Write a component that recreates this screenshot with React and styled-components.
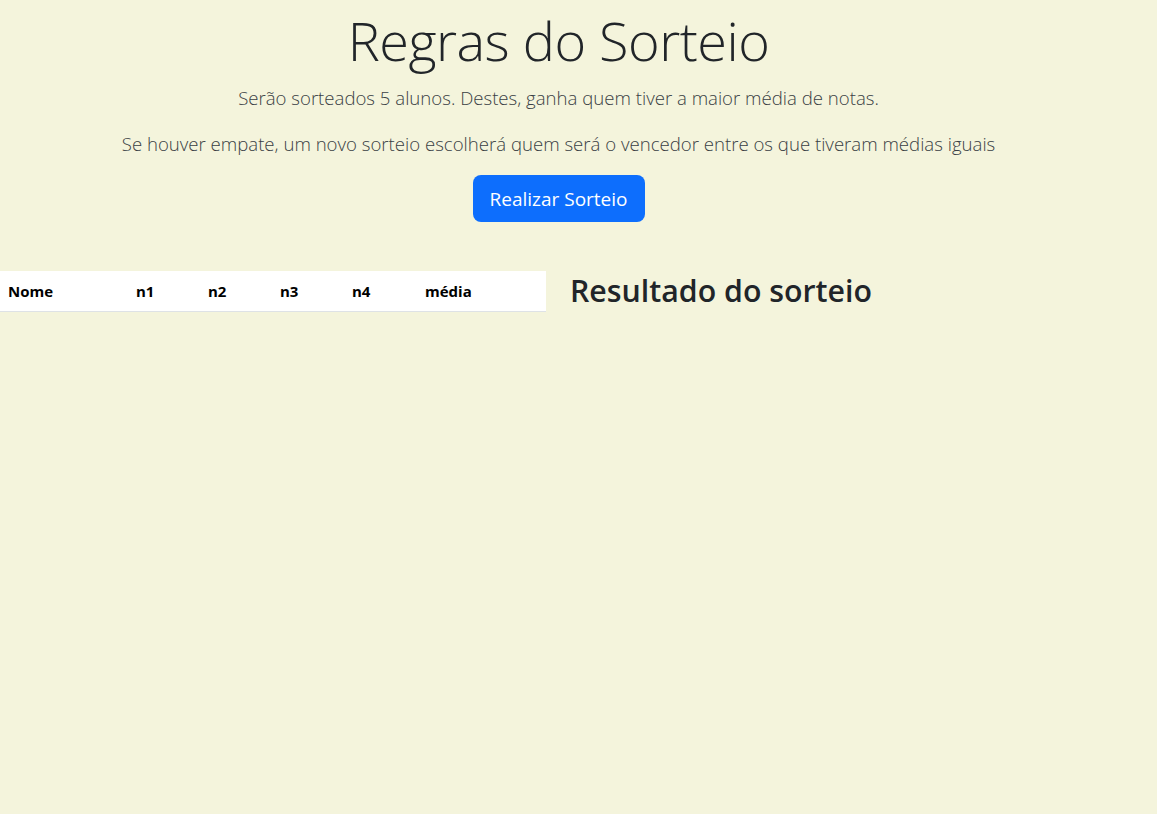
import React from "react";
import styled, { createGlobalStyle } from "styled-components";

const GlobalStyle = createGlobalStyle`
	* { box-sizing: border-box; }
	body {
		margin: 0;
		background-color: #f4f4dc;
		color: #212529;
		font-family: "Open Sans", "Noto Sans", "Liberation Sans", sans-serif;
	}
`;

const Page = styled.div`
	min-height: 100vh;
	display: flex;
	flex-direction: column;
`;

const Header = styled.header`
	display: flex;
	flex-direction: column;
	align-items: center;
	text-align: center;
	padding-right: 40px;
`;

const Title = styled.h1`
	margin: 8px 0 10px;
	font-size: 54px;
	font-weight: 300;
	line-height: 1.2;
	letter-spacing: -0.5px;
`;

const Lead = styled.p`
	margin: 0 0 16px;
	font-size: 18.6px;
	font-weight: 300;
	line-height: 30px;
	color: #3a3f44;
`;

const Button = styled.button`
	font-family: inherit;
	font-size: 19px;
	line-height: 1.5;
	padding: 10px 17px 9px;
	border: none;
	border-radius: 8px;
	color: #fff;
	background-color: #0d6efd;
	cursor: pointer;
`;

const Row = styled.div`
	display: flex;
	gap: 24px;
	margin-top: 49px;
`;

const Table = styled.table`
	width: 546px;
	border-collapse: collapse;
	background-color: #fff;
	align-self: flex-start;
`;

const Th = styled.th`
	text-align: left;
	font-size: 15px;
	font-weight: 700;
	color: #000;
	padding: 8px;
	height: 40px;
	width: ${(p) => p.w}px;
	border-bottom: 1px solid #dee2e6;
`;

const Result = styled.h2`
	margin: 0;
	font-size: 30.3px;
	font-weight: 600;
	line-height: 1.2;
	padding-top: 2px;
`;

const columns = [
	{ label: "Nome", w: 128 },
	{ label: "n1", w: 72 },
	{ label: "n2", w: 72 },
	{ label: "n3", w: 72 },
	{ label: "n4", w: 73 },
	{ label: "média", w: 129 },
];

function App() {
	return (
		<>
			<GlobalStyle />
			<Page>
				<Header>
					<Title>Regras do Sorteio</Title>
					<Lead>Serão sorteados 5 alunos. Destes, ganha quem tiver a maior média de notas.</Lead>
					<Lead>Se houver empate, um novo sorteio escolherá quem será o vencedor entre os que tiveram médias iguais</Lead>
					<Button>Realizar Sorteio</Button>
				</Header>
				<Row>
					<Table>
						<thead>
							<tr>
								{columns.map((c) => (
									<Th key={c.label} w={c.w}>{c.label}</Th>
								))}
							</tr>
						</thead>
					</Table>
					<Result>Resultado do sorteio</Result>
				</Row>
			</Page>
		</>
	);
}

export default App;
